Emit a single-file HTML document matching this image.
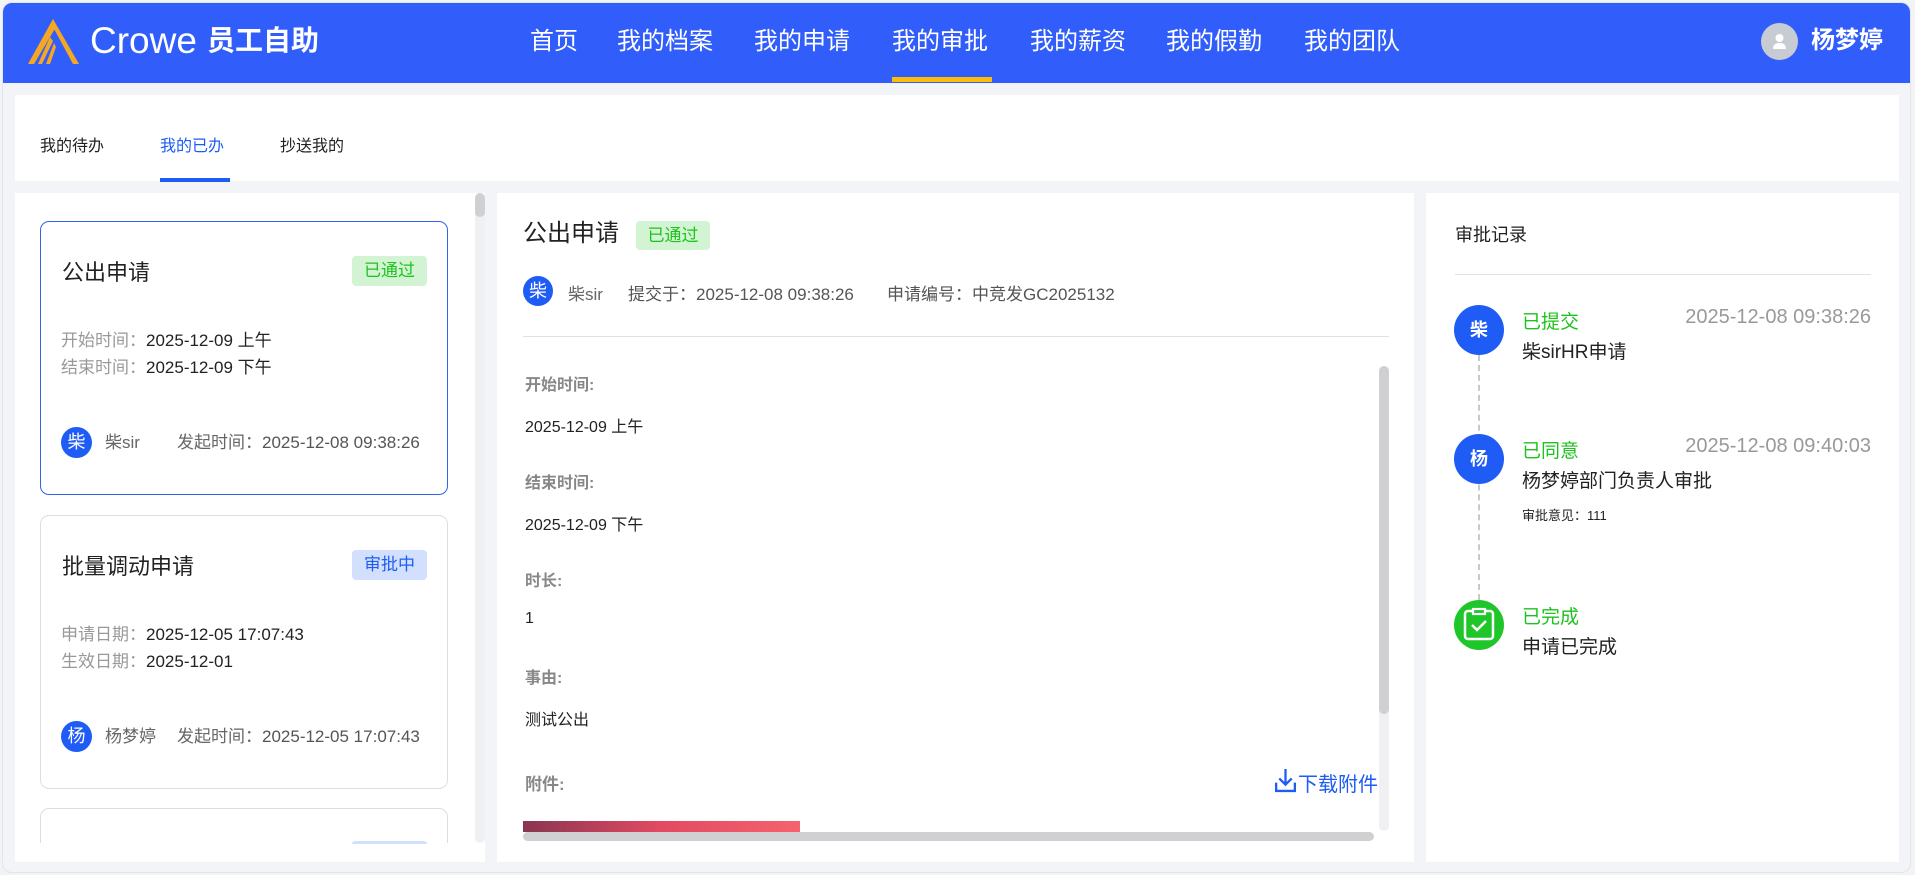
<!DOCTYPE html>
<html><head><meta charset="utf-8"><style>
*{margin:0;padding:0;box-sizing:border-box}
body{width:1915px;height:875px;background:#f2f3f5;font-family:"Liberation Sans","Noto Sans CJK SC",sans-serif;position:relative;overflow:hidden;color:#222}
.abs{position:absolute}
.frame{left:2px;top:2px;width:1909px;height:871px;background:#f3f4f8;border-radius:10px;border:1px solid #e3e5ea;overflow:hidden}
.hdr{left:0;top:0;width:1909px;height:80px;background:#315efb}
.nav{top:26px;font-size:24px;color:#fff;line-height:32px}
.w{background:#fff}
.t16{font-size:17px;line-height:22px}
.av{border-radius:50%;background:#1e5cf5;color:#fff;text-align:center}
.card{left:40px;width:408px;border:1px solid #ddd;border-radius:9px;background:#fff}
.lab{color:#999}
.badge{border-radius:4px;font-size:16px;text-align:center}
.fl{left:525px;font-size:16px;color:#888;font-weight:bold}
.fv{left:525px;font-size:16px;color:#222}
.green{color:#1ec21e}
.gd{color:#999;font-size:20px;right:44px}
</style></head><body>
<div class="abs frame">
<div class="abs hdr"></div>
</div>
<svg class="abs" style="left:26px;top:19px" width="54" height="46" viewBox="0 0 54 46">
<path d="M27 0 L53 45 L47 45 L27 8 Z" fill="#f5a623"/>
<path d="M27 0 L30 8 L8 45 L2 45 Z" fill="#f5a623"/>
<path d="M24 18 L12 45 L16 45 L27 22 Z" fill="#f5a623"/>
<path d="M28 24 L20 45 L24 45 L30 28 Z" fill="#f5a623"/>
</svg>
<div class="abs" style="left:90px;top:19px;font-size:37px;color:#fff;line-height:44px">Crowe</div>
<div class="abs" style="left:207px;top:22px;font-size:28px;font-weight:bold;color:#fff;line-height:38px">员工自助</div>
<div class="abs nav" style="left:530px">首页</div>
<div class="abs nav" style="left:617px">我的档案</div>
<div class="abs nav" style="left:754px">我的申请</div>
<div class="abs nav" style="left:892px">我的审批</div>
<div class="abs nav" style="left:1030px">我的薪资</div>
<div class="abs nav" style="left:1166px">我的假勤</div>
<div class="abs nav" style="left:1304px">我的团队</div>
<div class="abs" style="left:892px;top:77px;width:100px;height:5px;background:#fbbd08"></div>
<div class="abs" style="left:1761px;top:23px;width:37px;height:37px;border-radius:50%;background:#c7cbd3"></div>
<svg class="abs" style="left:1761px;top:23px" width="37" height="37"><circle cx="18.5" cy="15" r="4" fill="#fff"/><path d="M12 26 Q12 20 18.5 20 Q25 20 25 26 Z" fill="#fff"/></svg>
<div class="abs" style="left:1811px;top:25px;font-size:24px;font-weight:bold;color:#fff;line-height:32px">杨梦婷</div>

<div class="abs w" style="left:15px;top:95px;width:1884px;height:86px"></div>
<div class="abs" style="left:40px;top:132px;font-size:16px">我的待办</div>
<div class="abs" style="left:160px;top:132px;font-size:16px;color:#1e5cf5">我的已办</div>
<div class="abs" style="left:280px;top:132px;font-size:16px">抄送我的</div>
<div class="abs" style="left:160px;top:178px;width:70px;height:4px;background:#1e5cf5"></div>

<div class="abs w" style="left:15px;top:193px;width:470px;height:669px;overflow:hidden">
 <div class="abs" style="left:460px;top:0;width:10px;height:650px;background:#f0f0f2;border-radius:5px"></div>
 <div class="abs" style="left:460px;top:0;width:10px;height:24px;background:#d0d0d3;border-radius:5px"></div>
</div>
<div class="abs card" style="top:221px;height:274px;border-color:#2e62f0">
 <div class="abs" style="left:21px;top:33px;font-size:22px">公出申请</div>
 <div class="abs badge" style="left:311px;top:34px;width:75px;height:30px;line-height:30px;background:#d3f4d3;color:#1ec21e;font-size:17px">已通过</div>
 <div class="abs t16" style="left:20px;top:108px"><span class="lab">开始时间：</span>2025-12-09 上午</div>
 <div class="abs t16" style="left:20px;top:135px"><span class="lab">结束时间：</span>2025-12-09 下午</div>
 <div class="abs av" style="left:20px;top:205px;width:31px;height:31px;line-height:31px;font-size:18px">柴</div>
 <div class="abs t16" style="left:64px;top:210px;color:#666">柴sir</div>
 <div class="abs t16" style="left:136px;top:210px;color:#666">发起时间：<span style="color:#555">2025-12-08 09:38:26</span></div>
</div>
<div class="abs card" style="top:515px;height:274px">
 <div class="abs" style="left:21px;top:33px;font-size:22px">批量调动申请</div>
 <div class="abs badge" style="left:311px;top:34px;width:75px;height:30px;line-height:30px;background:#d3e0fd;color:#1e5cf5;font-size:17px">审批中</div>
 <div class="abs t16" style="left:20px;top:108px"><span class="lab">申请日期：</span>2025-12-05 17:07:43</div>
 <div class="abs t16" style="left:20px;top:135px"><span class="lab">生效日期：</span>2025-12-01</div>
 <div class="abs av" style="left:20px;top:205px;width:31px;height:31px;line-height:31px;font-size:18px">杨</div>
 <div class="abs t16" style="left:64px;top:210px;color:#666">杨梦婷</div>
 <div class="abs t16" style="left:136px;top:210px;color:#666">发起时间：<span style="color:#555">2025-12-05 17:07:43</span></div>
</div>
<div class="abs card" style="top:808px;height:35px;border-bottom:none;border-radius:9px 9px 0 0">
 <div class="abs" style="left:311px;top:32px;width:75px;height:3px;background:#d3e0fd;border-radius:4px 4px 0 0"></div>
</div>

<div class="abs w" style="left:497px;top:193px;width:917px;height:669px"></div>
<div class="abs" style="left:523px;top:218px;font-size:24px;line-height:32px">公出申请</div>
<div class="abs badge" style="left:636px;top:221px;width:74px;height:29px;line-height:29px;background:#d3f4d3;color:#1ec21e;font-size:17px">已通过</div>
<div class="abs av" style="left:523px;top:276px;width:30px;height:30px;line-height:30px;font-size:18px">柴</div>
<div class="abs" style="left:568px;top:280px;font-size:17px;color:#666">柴sir</div>
<div class="abs" style="left:628px;top:280px;font-size:17px;color:#555">提交于：2025-12-08 09:38:26</div>
<div class="abs" style="left:887px;top:280px;font-size:17px;color:#555">申请编号：中竞发GC2025132</div>
<div class="abs" style="left:523px;top:336px;width:866px;height:1px;background:#dfe1e8"></div>
<div class="abs fl" style="top:371px">开始时间:</div>
<div class="abs fv" style="top:413px">2025-12-09 上午</div>
<div class="abs fl" style="top:469px">结束时间:</div>
<div class="abs fv" style="top:511px">2025-12-09 下午</div>
<div class="abs fl" style="top:567px">时长:</div>
<div class="abs fv" style="top:610px">1</div>
<div class="abs fl" style="top:664px">事由:</div>
<div class="abs fv" style="top:706px">测试公出</div>
<div class="abs fl" style="top:770px;font-size:17px">附件:</div>
<svg class="abs" style="left:1274px;top:768px" width="23" height="25" viewBox="0 0 22 24"><path d="M11 1 V16 M5 10 L11 16 L17 10 M2 14 V22 H20 V14" stroke="#1e5cf5" stroke-width="2.2" fill="none"/></svg>
<div class="abs" style="left:1298px;top:768px;font-size:20px;color:#1e5cf5">下载附件</div>
<div class="abs" style="left:1379px;top:366px;width:10px;height:465px;background:#f0f0f2;border-radius:5px"></div>
<div class="abs" style="left:1379px;top:366px;width:10px;height:348px;background:#d0d0d3;border-radius:5px"></div>
<div class="abs" style="left:523px;top:821px;width:277px;height:11px;background:linear-gradient(90deg,#8a3550,#e24a62 50%,#f4636e)"></div>
<div class="abs" style="left:523px;top:832px;width:851px;height:9px;background:#d0d0d3;border-radius:5px"></div>

<div class="abs w" style="left:1426px;top:193px;width:473px;height:669px"></div>
<div class="abs" style="left:1455px;top:221px;font-size:18px">审批记录</div>
<div class="abs" style="left:1455px;top:274px;width:416px;height:1px;background:#dfe1e8"></div>
<div class="abs" style="left:1478px;top:355px;width:0;height:245px;border-left:2px dashed #c8c8c8"></div>
<div class="abs av" style="left:1454px;top:305px;width:50px;height:50px;line-height:50px;font-size:18px;font-weight:bold">柴</div>
<div class="abs av" style="left:1454px;top:434px;width:50px;height:50px;line-height:50px;font-size:18px;font-weight:bold">杨</div>
<div class="abs" style="left:1454px;top:600px;width:50px;height:50px;border-radius:50%;background:#1fc62a"></div>
<svg class="abs" style="left:1454px;top:600px" width="50" height="50"><rect x="11" y="11" width="28" height="28" rx="3" stroke="#fff" stroke-width="2.5" fill="none"/><rect x="19" y="9" width="12" height="5" stroke="#fff" stroke-width="2.2" fill="#1fc62a"/><path d="M18 25 L23 30 L32 21" stroke="#fff" stroke-width="2.5" fill="none"/></svg>
<div class="abs green" style="left:1522px;top:307px;font-size:19px">已提交</div>
<div class="abs gd" style="top:306px">2025-12-08 09:38:26</div>
<div class="abs" style="left:1522px;top:337px;font-size:19px">柴sirHR申请</div>
<div class="abs green" style="left:1522px;top:436px;font-size:19px">已同意</div>
<div class="abs gd" style="top:435px">2025-12-08 09:40:03</div>
<div class="abs" style="left:1522px;top:466px;font-size:19px">杨梦婷部门负责人审批</div>
<div class="abs" style="left:1522px;top:505px;font-size:13px">审批意见：111</div>
<div class="abs green" style="left:1522px;top:602px;font-size:19px">已完成</div>
<div class="abs" style="left:1522px;top:632px;font-size:19px">申请已完成</div>
</body></html>
